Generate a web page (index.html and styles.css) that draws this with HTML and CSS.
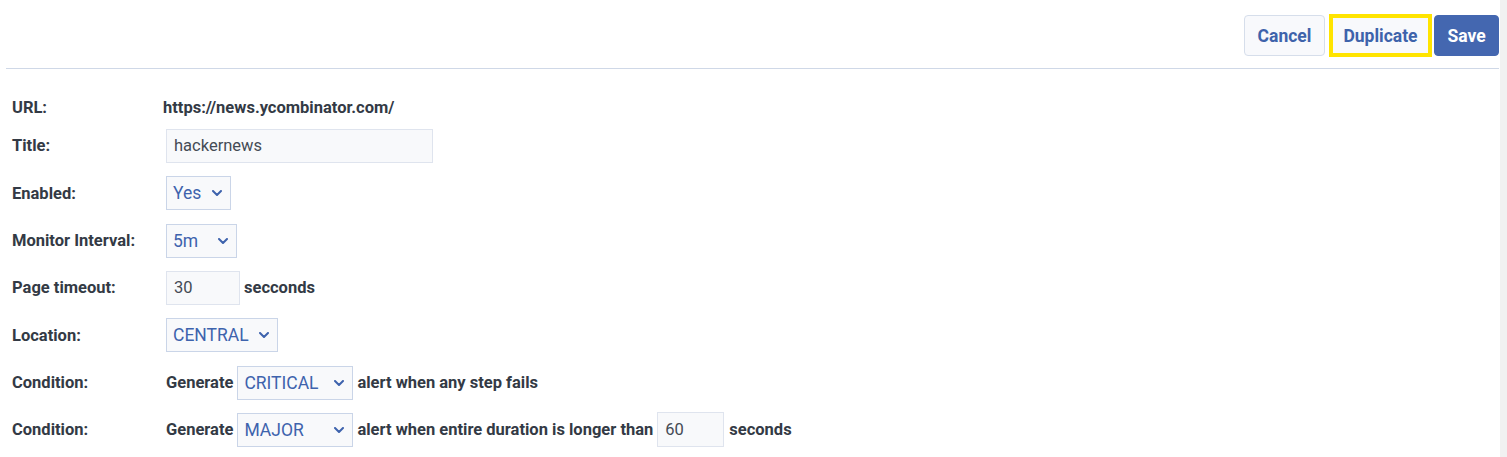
FILE: index.html
```html
<!DOCTYPE html>
<html>
<head>
<meta charset="utf-8">
<link rel="stylesheet" href="styles.css">
</head>
<body>
<div class="page">
  <main class="main">
    <header class="toolbar">
      <button class="btn btn-light btn-cancel">Cancel</button>
      <button class="btn btn-light btn-dup">Duplicate</button>
      <button class="btn btn-primary btn-save">Save</button>
    </header>
    <hr class="divider">
    <form class="form">
      <div class="row row-url">
        <div class="label">URL:</div>
        <div class="value url">https://news.ycombinator.com/</div>
      </div>
      <div class="row">
        <div class="label">Title:</div>
        <div class="value"><span class="input w-title">hackernews</span></div>
      </div>
      <div class="row">
        <div class="label">Enabled:</div>
        <div class="value"><span class="select w-yes">Yes<svg class="chev" viewBox="0 0 10 6"><path d="M1 1l4 4 4-4" /></svg></span></div>
      </div>
      <div class="row">
        <div class="label">Monitor Interval:</div>
        <div class="value"><span class="select w-5m">5m<svg class="chev" viewBox="0 0 10 6"><path d="M1 1l4 4 4-4" /></svg></span></div>
      </div>
      <div class="row">
        <div class="label">Page timeout:</div>
        <div class="value"><span class="input w-num">30</span><span class="text">secconds</span></div>
      </div>
      <div class="row">
        <div class="label">Location:</div>
        <div class="value"><span class="select w-loc">CENTRAL<svg class="chev" viewBox="0 0 10 6"><path d="M1 1l4 4 4-4" /></svg></span></div>
      </div>
      <div class="row">
        <div class="label">Condition:</div>
        <div class="value"><span class="text lead">Generate</span><span class="select w-sev">CRITICAL<svg class="chev" viewBox="0 0 10 6"><path d="M1 1l4 4 4-4" /></svg></span><span class="text">alert when any step fails</span></div>
      </div>
      <div class="row">
        <div class="label">Condition:</div>
        <div class="value"><span class="text lead">Generate</span><span class="select w-sev">MAJOR<svg class="chev" viewBox="0 0 10 6"><path d="M1 1l4 4 4-4" /></svg></span><span class="text">alert when entire duration is longer than</span><span class="input w-num2">60</span><span class="text">seconds</span></div>
      </div>
    </form>
  </main>
  <div class="scrolltrack"></div>
</div>
</body>
</html>
```
FILE: styles.css
```css
html, body {
  margin: 0;
  padding: 0;
  background: #ffffff;
}
body {
  font-family: Roboto, "Liberation Sans", Arial, sans-serif;
  color: #333a45;
}
.page {
  display: flex;
  width: 1507px;
  height: 457px;
  overflow: hidden;
}
.main {
  flex: 1;
  padding-left: 6px;
  padding-right: 1px;
}
.scrolltrack {
  width: 7px;
  background: #f1f1f1;
}
.toolbar {
  display: flex;
  justify-content: flex-end;
  align-items: center;
  box-sizing: border-box;
  height: 68px;
  padding-top: 15px;
  padding-bottom: 12px;
}
.btn {
  font-family: Roboto, "Liberation Sans", Arial, sans-serif;
  font-weight: 700;
  font-size: 17.5px;
  height: 41px;
  border-radius: 4px;
  box-sizing: border-box;
  padding: 0;
  cursor: pointer;
}
.btn-light {
  background: #f8f9fc;
  border: 1px solid #d6deeb;
  color: #3e63ab;
}
.btn-cancel {
  width: 81px;
  margin-right: 4px;
}
.btn-dup {
  width: 103px;
  height: 43px;
  border: 4px solid #ffe400;
  border-radius: 0;
  margin-right: 2px;
}
.btn-primary {
  background: #4467b0;
  border: 1px solid #4467b0;
  color: #ffffff;
}
.btn-save {
  width: 65px;
}
.divider {
  margin: 0;
  border: 0;
  height: 1px;
  background: #cfd8e7;
}
.form {
  display: flex;
  flex-direction: column;
  gap: 13.34px;
  padding-top: 30.67px;
  padding-left: 6px;
}
.row {
  display: flex;
  align-items: center;
  height: 34px;
}
.row-url {
  height: 16px;
}
.label {
  width: 154px;
  flex: none;
  font-size: 16.5px;
  font-weight: 700;
  color: #333a45;
}
.value {
  display: flex;
  align-items: center;
  font-size: 16.5px;
}
.url {
  font-weight: 700;
  margin-left: -3px;
  color: #333a45;
}
.input, .select {
  box-sizing: border-box;
  height: 34px;
  display: inline-flex;
  align-items: center;
  background: #f8f9fb;
}
.input {
  border: 1px solid #dfe4ee;
  padding-left: 7px;
  color: #444b55;
  font-size: 16.5px;
}
.select {
  border: 1px solid #cad5e8;
  padding-left: 6px;
  padding-right: 8px;
  color: #3e63ad;
  font-size: 17.5px;
  justify-content: space-between;
}
.chev {
  width: 10px;
  height: 6px;
  flex: none;
}
.chev path {
  fill: none;
  stroke: #3e63ad;
  stroke-width: 2;
  stroke-linecap: round;
  stroke-linejoin: round;
}
.w-title { width: 267px; }
.w-yes { width: 65px; }
.w-5m { width: 71px; }
.w-loc { width: 112px; }
.w-sev { width: 116px; }
.w-num { width: 74px; }
.w-num2 { width: 67px; height: 35px; margin-left: 4px; }
.text {
  font-weight: 700;
  font-size: 16.5px;
  color: #333a45;
  margin-left: 4px;
}
.lead {
  margin-left: 0;
  margin-right: 4px;
}
.w-num2 + .text {
  margin-left: 5px;
}
```
